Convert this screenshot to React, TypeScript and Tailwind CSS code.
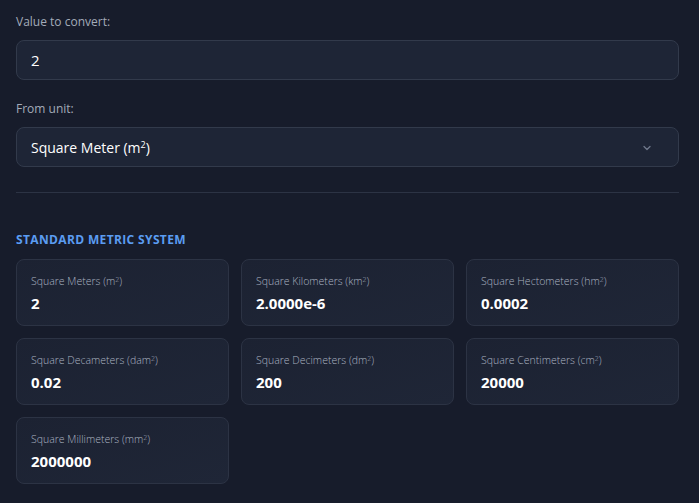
import { useState } from 'react';

type Unit = { label: string; sup: string; value: string };

const units: Unit[] = [
  { label: 'Square Meters (m', sup: '2', value: '2' },
  { label: 'Square Kilometers (km', sup: '2', value: '2.0000e-6' },
  { label: 'Square Hectometers (hm', sup: '2', value: '0.0002' },
  { label: 'Square Decameters (dam', sup: '2', value: '0.02' },
  { label: 'Square Decimeters (dm', sup: '2', value: '200' },
  { label: 'Square Centimeters (cm', sup: '2', value: '20000' },
  { label: 'Square Millimeters (mm', sup: '2', value: '2000000' },
];

function ResultCard({ unit }: { unit: Unit }) {
  return (
    <div className="flex h-[67px] flex-col rounded-lg border border-[#2c3344] bg-gradient-to-br from-[#1c2232] to-[#1f2637] px-[14px] pt-[13px]">
      <span className="text-[10.5px] leading-[16px] font-light text-[#aab2c0]">
        {unit.label}
        <sup className="text-[7px]">{unit.sup}</sup>)
      </span>
      <span className="mt-[3px] text-[15px] leading-[22px] font-bold text-white">
        {unit.value}
      </span>
    </div>
  );
}

export default function App() {
  const [value, setValue] = useState('2');

  return (
    <div
      className="min-h-[503px] bg-[#171c2b] pt-[14px] pr-5 pb-6 pl-4"
      style={{ fontFamily: '"Open Sans", "Noto Sans", sans-serif' }}
    >
      <label className="block text-[12px] leading-[16px] font-medium text-[#a3abb9]">
        Value to convert:
      </label>
      <input
        value={value}
        onChange={(e) => setValue(e.target.value)}
        className="mt-[10px] h-10 w-full rounded-lg border border-[#323a4b] bg-[#1e2536] px-[14px] text-[15px] text-white outline-none"
      />

      <label className="mt-[21px] block text-[12px] leading-[16px] font-medium text-[#a3abb9]">
        From unit:
      </label>
      <div className="relative mt-[10px] flex h-10 items-center rounded-lg border border-[#323a4b] bg-[#1e2536] px-[14px]">
        <span className="text-[14px] text-white">
          Square Meter (m<sup className="text-[9px]">2</sup>)
        </span>
        <svg
          className="absolute right-[27px] top-[17px]"
          width="8"
          height="6"
          viewBox="0 0 8 6"
          fill="none"
        >
          <path d="M1 1.5 L4 4.5 L7 1.5" stroke="#6f788b" strokeWidth="1.3" strokeLinecap="round" strokeLinejoin="round" />
        </svg>
      </div>

      <div className="mt-[25px] h-px bg-[#2c3344]" />

      <h2 className="mt-[40px] text-[12px] leading-[14px] font-bold tracking-[0.03em] text-[#5b9cf2] uppercase">
        Standard Metric System
      </h2>

      <div className="mt-3 grid grid-cols-3 gap-3">
        {units.map((u) => (
          <ResultCard key={u.label} unit={u} />
        ))}
      </div>
    </div>
  );
}
